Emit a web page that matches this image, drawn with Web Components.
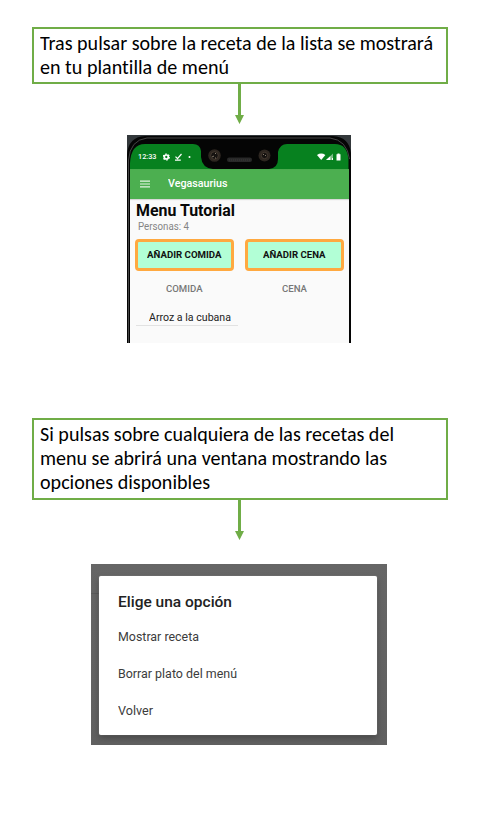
<!DOCTYPE html>
<html lang="es">
<head>
<meta charset="utf-8">
<title>Vegasaurius</title>
<style>
body{margin:0;width:491px;height:817px;background:#fff;overflow:hidden}
</style>
</head>
<body>
<tutorial-page></tutorial-page>
<script>
const define=(name,html,setup)=>customElements.define(name,class extends HTMLElement{
  connectedCallback(){
    if(this.shadowRoot)return;
    this.attachShadow({mode:'open'}).innerHTML=html;
    if(setup)setup(this);
  }
});

// One line of text, fitted horizontally to the width in its "w" attribute.
define('fit-line',`<style>:host{display:block;white-space:nowrap}span{display:inline-block;transform-origin:0 50%}</style><span><slot></slot></span>`,el=>{
  const s=el.shadowRoot.querySelector('span');
  const w=+el.getAttribute('w');
  el.style.width=w+'px';
  s.style.transform=`scaleX(${w/s.getBoundingClientRect().width})`;
});

define('note-box',`<style>
:host{display:block;box-sizing:border-box;width:416px;margin-left:31.5px;border:2px solid #70ad47;padding:2.5px 6.5px;background:#fff;color:#000;
font:20px/24px Carlito,Lato,sans-serif;font-variant-ligatures:none}
</style><slot></slot>`);

define('down-arrow',`<style>:host{display:block;height:40px;margin-left:234px}svg{display:block}</style>
<svg width="11" height="40"><path d="M4 0h3v31h3L5.500 40 1 31h3z" fill="#70ad47"/></svg>`);

define('status-bar',`<style>
:host{display:flex;height:25px;align-items:center;padding:0 8px 0 8px;color:#fff;font:500 7.8px/10px Roboto,sans-serif;box-sizing:border-box}
svg{display:block}.left{margin-left:6px}.right{margin-left:auto}
</style>
<fit-line w="18.500">12:33</fit-line>
<svg class="left" width="32" height="10" viewBox="0 0 32 10">
<circle cx="3.300" cy="5" r="2" fill="none" stroke="#fff" stroke-width="1.700"/>
<circle cx="3.300" cy="5" r="3" fill="none" stroke="#fff" stroke-width="1.200" stroke-dasharray="1.700 1.440"/>
<path d="M12.500 4.600l2 2 4-4.600M12 8.200h5.800" fill="none" stroke="#fff" stroke-width="1.200"/>
<circle cx="26.500" cy="5" r="1" fill="#fff"/></svg>
<svg class="right" width="26" height="10" viewBox="0 0 26 10">
<path d="M2 3q4.200-2.800 8.400 0L6.200 8z" fill="#fff"/>
<path d="M18 1.500V8h-7z" fill="#7dbb87"/><path d="M15.300 4.300V8h-4.300z" fill="#fff"/><path d="M17 6h1v2h-1z" fill="#fff"/>
<path d="M21.500 2.300h1V1.500h2v.8h1V8.500h-4z" fill="#fff"/></svg>`);

define('app-bar',`<style>
:host{display:flex;align-items:center;height:29.500px;background:linear-gradient(#4aa84e,#4caf50 1.500px);padding-left:10px;color:#fff;font:500 10.500px/14px Roboto,sans-serif;box-shadow:0 1px 1px #0002}
svg{margin-right:18px}</style>
<svg width="10" height="8"><path d="M0 1.200h10M0 4h10M0 6.800h10" stroke="#e4f5e4" stroke-width="1.200"/></svg><slot></slot>`);

define('menu-button',`<style>
:host{display:flex;box-sizing:border-box;height:32px;align-items:center;justify-content:center;border:3px solid #ffa940;border-radius:4px;background:#b2ffd6;color:#111;font:bold 9.500px/12px Roboto,sans-serif}
</style><slot></slot>`);

define('phone-view',`<style>
:host{display:block;position:relative;width:224px;height:208px;margin-left:127px;overflow:hidden;background:#fafafa;font-family:Roboto,sans-serif}
.bezel{position:absolute;inset:0}
.screen{position:relative;padding:9px 2px 0 3px}
.content{padding:2px 5px 0 5.500px}
h1{margin:0;font-size:16px;line-height:19px;color:#080808;font-weight:700}
.people{font-size:10px;line-height:12px;color:#858585;margin:1.500px 0 5.500px 2.500px}
.cols{display:grid;grid-template-columns:99px 99px;column-gap:10.500px;margin-left:-.5px}
.head{display:flex;justify-content:center;font-size:9.500px;line-height:12px;font-weight:500;color:#777;margin-top:12px}
.dish{border-bottom:1px solid #e2e2e2;width:102px;box-sizing:border-box;padding-left:13px;margin-top:16px;font-size:10.500px;line-height:14px;color:#222}
</style>
<svg class="bezel" width="224" height="208">
<path d="M0 0h224v34H0z" fill="#33383b"/>
<path d="M0 208V20Q1 2 18 1H206Q222 2 224 18V208h-2V34H3V208z" fill="#050505"/>
<path d="M1.500 208V25Q3 5 20 3H203Q220 5 222.500 24" fill="none" stroke="#555" stroke-width=".8"/>
<path d="M3 35V28Q4 9 18 9H66Q73 9 74 16V22Q75 33 86 34H142Q151 33 151 24V17Q153 9 160 9H208Q220 9 221.500 24V35z" fill="#07811f"/>
<g fill="#2d2620"><circle cx="87.500" cy="20.500" r="6.300"/><circle cx="137.500" cy="20.500" r="6"/></g>
<g fill="#151210" stroke="#504438" stroke-width=".7"><circle cx="87.500" cy="20.500" r="3.800"/><circle cx="137.500" cy="20.500" r="3.200"/></g>
<path d="M85 22l2-1m1-3l1 1m-1 4l1 0M136 19l1 1m1 1l1-1" stroke="#847969" stroke-width="1"/>
<rect x="100" y="22.500" width="25" height="4.500" rx="2.200" fill="#292929"/>
<path d="M102 25H124" stroke="#3b3b3b" stroke-dasharray="1 1"/>
</svg>
<div class="screen"><status-bar></status-bar><app-bar><fit-line w="59.500">Vegasaurius</fit-line></app-bar>
<div class="content"><h1><fit-line w="99">Menu Tutorial</fit-line></h1>
<div class="people"><fit-line w="51">Personas: 4</fit-line></div>
<div class="cols"><menu-button><fit-line w="74.500">AÑADIR COMIDA</fit-line></menu-button><menu-button><fit-line w="62.500">AÑADIR CENA</fit-line></menu-button>
<div class="head"><fit-line w="36.500">COMIDA</fit-line></div><div class="head"><fit-line w="25">CENA</fit-line></div></div>
<div class="dish"><fit-line w="82">Arroz a la cubana</fit-line></div></div></div>`);

define('option-dialog',`<style>
:host{display:block;box-sizing:border-box;width:296px;height:181px;margin-left:91px;padding:12.500px 10px 9.500px 8px;background:linear-gradient(90deg,#5a5a5a,#5a5a5a) 0 29px/8px 1px no-repeat,linear-gradient(#666,#606060)}
.card{box-sizing:border-box;height:159px;background:#fff;border-radius:2px;box-shadow:0 3px 6px #0004,0 0 1px #bbb;padding:16px 18.500px;font:12.500px/16px Roboto,sans-serif;color:#3c3c3c}
.title{font-size:15.500px;line-height:20px;font-weight:500;color:#222;margin-bottom:16.500px}
.opt{margin-bottom:21.300px}
</style><div class="card"><div class="title"><fit-line w="114">Elige una opción</fit-line></div>
<div class="opt"><fit-line w="81">Mostrar receta</fit-line></div><div class="opt"><fit-line w="119">Borrar plato del menú</fit-line></div><div class="opt"><fit-line w="35">Volver</fit-line></div></div>`);

define('tutorial-page',`<style>:host{display:block;padding-top:26.500px}
.a{height:57.500px}.b{height:82px}phone-view{margin-top:11px}.second{margin-top:74.500px}option-dialog{margin-top:24px}</style>
<note-box class="a"><fit-line w="393">Tras pulsar sobre la receta de la lista se mostrará</fit-line><fit-line w="189">en tu plantilla de menú</fit-line></note-box>
<down-arrow></down-arrow>
<phone-view></phone-view>
<note-box class="b second"><fit-line w="354">Si pulsas sobre cualquiera de las recetas del</fit-line><fit-line w="347">menu se abrirá una ventana mostrando las</fit-line><fit-line w="170">opciones disponibles</fit-line></note-box>
<down-arrow></down-arrow>
<option-dialog></option-dialog>`);
</script>
</body>
</html>
